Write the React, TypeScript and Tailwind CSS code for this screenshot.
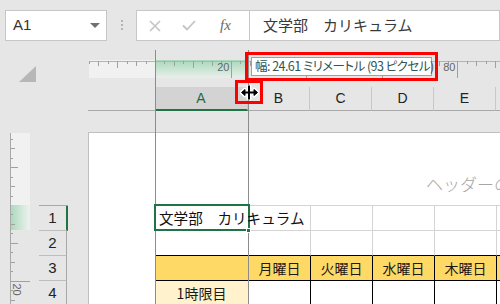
import React from "react";

const STEP = 9.45;

function TopRuler() {
  const W = 411;
  const x0 = 66;
  const ticks: React.ReactElement[] = [];
  const labels: React.ReactElement[] = [];
  for (let k = -7; k <= 37; k++) {
    const x = Math.round(x0 + k * STEP) + 0.5;
    if (x < 0 || x > W || k === 0) continue;
    let y2 = 4;
    if (k % 2 === 0) y2 = 6;
    if (k % 4 === 0) y2 = 8;
    if (k % 8 === 0 && k > 0) {
      y2 = 18;
      if (k === 8 || k === 32) {
        labels.push(
          <text key={"l" + k} x={x - 2} y={11} textAnchor="end" fontSize="11" fill="#666" fontFamily="Liberation Sans, sans-serif">
            {(k / 4) * 10}
          </text>
        );
      }
    }
    ticks.push(<line key={k} x1={x} y1={1} x2={x} y2={y2} stroke="#a0a0a0" strokeWidth={1} />);
  }
  return (
    <div className="relative h-[18px] w-[411px] flex shrink-0">
      <div className="w-[66px] h-full bg-[#f1f1f1] shrink-0" />
      <div className="w-[93px] h-full bg-gradient-to-b from-[#a9d8bb] to-[#e9efeb] shrink-0" />
      <div className="flex-1 h-full bg-[#e6e6e6]" />
      <svg className="absolute left-0 top-0" width={411} height={18}>
        <line x1={0} y1={1.5} x2={411} y2={1.5} stroke="#b4b4b4" strokeWidth={1} />
        {ticks}
        {labels}
      </svg>
    </div>
  );
}

function LeftRuler() {
  const H = 171;
  const y0 = 72;
  const ticks: React.ReactElement[] = [];
  const labels: React.ReactElement[] = [];
  for (let k = -8; k <= 12; k++) {
    const y = Math.round(y0 + k * STEP) + 0.5;
    if (y < 0 || y > H || k === 0) continue;
    let x2 = 3;
    if (k % 2 === 0) x2 = 5;
    if (k % 4 === 0) x2 = 8;
    if (k % 8 === 0 && k > 0) {
      x2 = 20;
      labels.push(
        <text
          key={"l" + k}
          x={0}
          y={0}
          fontSize="11"
          fill="#666"
          fontFamily="Liberation Sans, sans-serif"
          transform={`translate(3 ${y + 2}) rotate(90)`}
        >
          {(k / 4) * 10}
        </text>
      );
    }
    ticks.push(<line key={k} x1={1} y1={y} x2={x2} y2={y} stroke="#a0a0a0" strokeWidth={1} />);
  }
  return (
    <div className="relative w-[20px] h-[171px] flex flex-col shrink-0">
      <div className="h-[72px] w-full bg-[#f1f1f1] shrink-0" />
      <div className="h-[25px] w-full bg-gradient-to-r from-[#a9d8bb] to-[#eef2ef] shrink-0" />
      <div className="flex-1 w-full" />
      <svg className="absolute left-0 top-0" width={20} height={171}>
        <line x1={0.5} y1={0} x2={0.5} y2={171} stroke="#a8a8a8" strokeWidth={1} />
        {ticks}
        {labels}
      </svg>
    </div>
  );
}

const cellFont = "font-['Noto_Sans_CJK_JP',sans-serif]";
const latin = "font-['Liberation_Sans',sans-serif]";

function ColHeader({ label, w, active, last }: { label: string; w: string; active?: boolean; last?: boolean }) {
  return (
    <div
      className={`${w} shrink-0 h-full flex items-center justify-center ${last ? "" : "border-r border-r-[#c8c8c8]"} ${
        active ? "bg-[#d3d3d3] text-[#1f6b45] border-b-2 border-b-[#217346]" : "border-b border-b-[#a8a8a8]"
      } text-[14px] ${latin}`}
    >
      {label}
    </div>
  );
}

export default function App() {
  const days = ["月曜日", "火曜日", "水曜日", "木曜日", ""];
  return (
    <div className={`relative w-[500px] h-[304px] overflow-hidden bg-[#e6e6e6] ${latin}`}>
      {/* Formula bar */}
      <div className="h-[50px] flex items-start pt-[10px]">
        <div className="shrink-0 ml-[5px] w-[102px] h-[31px] border border-[#c6c6c6] bg-white flex items-center justify-between pl-[7px] pr-[6px]">
          <span className="text-[15px] text-[#333]">A1</span>
          <svg width="10" height="6" viewBox="0 0 10 6">
            <polygon points="0,0 10,0 5,5" fill="#707070" />
          </svg>
        </div>
        <div className="shrink-0 ml-[14px] mt-[10px] flex flex-col gap-[2px]">
          <div className="w-[2px] h-[2px] bg-[#b4b4b4]" />
          <div className="w-[2px] h-[2px] bg-[#b4b4b4]" />
          <div className="w-[2px] h-[2px] bg-[#b4b4b4]" />
        </div>
        <div className="shrink-0 ml-[13px] w-[114px] h-[31px] border border-[#c6c6c6] bg-white flex items-center">
          <svg className="ml-[12px]" width="12" height="12" viewBox="0 0 12 12">
            <path d="M1 1 L11 11 M11 1 L1 11" stroke="#c4c4c4" strokeWidth="1.6" />
          </svg>
          <svg className="ml-[21px]" width="14" height="11" viewBox="0 0 14 11">
            <path d="M1 5.5 L5 9.5 L13 1" stroke="#c4c4c4" strokeWidth="1.8" fill="none" />
          </svg>
          <span className="ml-[24px] text-[15px] italic text-[#6a6a6a] font-['Liberation_Serif',serif]">fx</span>
        </div>
        <div className={`-ml-px flex-1 min-w-0 h-[31px] border border-[#c6c6c6] bg-white flex items-center pl-[13px] text-[15px] text-[#3a3a3a] ${cellFont}`}>
          文学部　カリキュラム
        </div>
      </div>

      {/* Sheet area */}
      <div className="flex h-[254px]">
        {/* Left column */}
        <div className="w-[88px] shrink-0 flex flex-col">
          <div className="h-[83px] pl-[19px] pt-[16px] shrink-0">
            <svg width="17" height="16" viewBox="0 0 17 16">
              <polygon points="17,0 17,16 0,16" fill="#b7b7b7" />
            </svg>
          </div>
          <div className="flex">
            <div className="ml-[10px] shrink-0">
              <LeftRuler />
            </div>
            <div className="ml-[9px] w-[29px] shrink-0 pt-[72px] flex flex-col">
              <div className="border-t border-[#a8a8a8]" />
              {["1", "2", "3", "4"].map((n, i) => (
                <div
                  key={n}
                  className={`h-[25px] shrink-0 border-b border-b-[#bdbdbd] flex items-center justify-center text-[15px] text-[#222] ${
                    i === 0 ? "border-r-2 border-r-[#217346]" : "border-r border-r-[#a8a8a8] mr-px"
                  }`}
                >
                  {n}
                </div>
              ))}
            </div>
          </div>
        </div>

        {/* Right area */}
        <div className="flex-1 min-w-0 overflow-hidden flex flex-col">
          <div className="mt-[10px] ml-px shrink-0">
            <TopRuler />
          </div>
          {/* column headers */}
          <div className="mt-[9px] h-[24px] shrink-0 flex text-[#222]">
            <div className="w-[67px] shrink-0 h-full border-b border-[#a8a8a8]" />
            <ColHeader label="A" w="w-[93px]" active />
            <ColHeader label="B" w="w-[62px]" />
            <ColHeader label="C" w="w-[62px]" />
            <ColHeader label="D" w="w-[62px]" />
            <ColHeader label="E" w="w-[62px]" />
            <ColHeader label="" w="w-[62px]" last />
          </div>
          {/* page */}
          <div className="mt-[21px] flex-1 bg-white border-l border-t border-[#bfbfbf] flex flex-col">
            <div className="h-[72px] shrink-0 relative">
              <div className={`absolute left-[337px] top-[38px] whitespace-nowrap text-[17px] text-[#a6a6a6] ${cellFont} font-light`}>
                ヘッダーの追加
              </div>
            </div>
            <div className={`flex flex-col ${cellFont}`}>
              {/* row 1 */}
              <div className="flex h-[26px] shrink-0 border-t border-[#d4d4d4] ml-[66px]">
                <div className="w-[94px] shrink-0 h-full border-b border-[#d4d4d4] relative">
                  <span className="absolute left-[4px] top-[1px] whitespace-nowrap text-[14.6px] text-[#111] z-10">
                    文学部　カリキュラム
                  </span>
                </div>
                {[0, 1, 2, 3, 4].map((i) => (
                  <div key={i} className="w-[62px] shrink-0 h-full border-b border-r border-[#d4d4d4]" />
                ))}
              </div>
              {/* row 2 */}
              <div className="flex h-[25px] shrink-0 ml-[66px]">
                <div className="w-[94px] shrink-0 h-full border-b border-b-black border-r border-r-[#d4d4d4]" />
                {[0, 1, 2, 3, 4].map((i) => (
                  <div key={i} className="w-[62px] shrink-0 h-full border-b border-b-black border-r border-r-[#d4d4d4]" />
                ))}
              </div>
              {/* row 3 */}
              <div className="flex h-[25px] shrink-0 ml-[66px]">
                <div className="w-[94px] shrink-0 h-full border-b border-r border-black bg-[#ffd966]" />
                {days.map((d, i) => (
                  <div
                    key={i}
                    className="w-[62px] shrink-0 h-full border-b border-r border-black bg-[#ffd966] flex items-center justify-center text-[14px] text-[#1a1a1a]"
                  >
                    {d}
                  </div>
                ))}
              </div>
              {/* row 4 */}
              <div className="flex h-[25px] shrink-0 ml-[66px]">
                <div className="w-[94px] shrink-0 h-full border-b border-r border-black bg-[#fff2cc] flex items-center justify-center text-[14px] text-[#1a1a1a]">
                  1時限目
                </div>
                {[0, 1, 2, 3, 4].map((i) => (
                  <div key={i} className="w-[62px] shrink-0 h-full border-b border-r border-black bg-white" />
                ))}
              </div>
            </div>
          </div>
        </div>
      </div>

      {/* drag guide lines */}
      <div className="absolute left-[155px] top-[50px] w-px h-[254px] bg-[#8c8c8c]" />
      <div className="absolute left-[248px] top-[50px] w-px h-[254px] bg-[#8c8c8c]" />

      {/* A1 selection */}
      <div className="absolute left-[154px] top-[204px] w-[96px] h-[27px] border-2 border-[#217346]" />
      <div className="absolute left-[246px] top-[228px] w-[5px] h-[5px] bg-[#217346] border border-white" />

      {/* tooltip */}
      <div className="absolute left-[245px] top-[52px] w-[193px] h-[29px] border-[3px] border-[#ff0000]" />
      <div
        className={`absolute left-[251px] top-[57px] w-[181px] h-[19px] bg-white border border-[#a0a0a0] flex items-center pl-[3px] text-[12.5px] tracking-[-0.55px] text-[#2f5555] whitespace-nowrap [font-feature-settings:'palt'] ${cellFont}`}
      >
        幅: 24.61 ミリメートル (93 ピクセル)
      </div>

      {/* cursor box */}
      <div className="absolute left-[235px] top-[80px] w-[28px] h-[24px] border-[3px] border-[#ff0000]" />
      <svg className="absolute left-[240px] top-[84px]" width="19" height="17" viewBox="0 0 19 17">
        <g stroke="white" strokeWidth="3" fill="white" strokeLinejoin="round">
          <path d="M8 1 V16 M10 1 V16" />
          <path d="M1 8.5 L5 5 V12 Z M18 8.5 L14 5 V12 Z" />
          <path d="M3 8.5 H16" />
        </g>
        <g stroke="black" strokeWidth="1" fill="black">
          <path d="M8.5 1.5 V15.5 M9.5 1.5 V15.5" />
          <path d="M1.5 8.5 L5 5.5 V11.5 Z M17.5 8.5 L14 5.5 V11.5 Z" />
          <path d="M3 8.5 H16" strokeWidth="2" />
        </g>
      </svg>
    </div>
  );
}
